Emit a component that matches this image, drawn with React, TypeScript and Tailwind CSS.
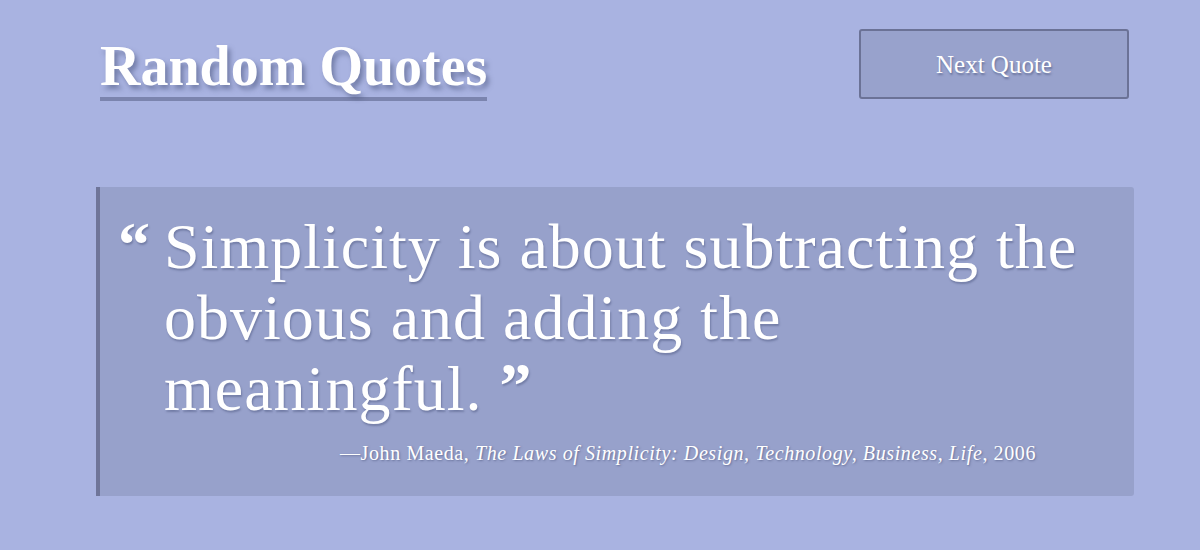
import React from 'react';

const quote = {
  lines: ['Simplicity is about subtracting the', 'obvious and adding the', 'meaningful.'],
  author: 'John Maeda',
  source: 'The Laws of Simplicity: Design, Technology, Business, Life',
  year: '2006',
};

const App = () => {
  return (
    <div className="min-h-[550px] w-full bg-[#a9b3e1] text-white font-['Liberation_Serif',serif] overflow-hidden">
      <header className="flex items-start justify-between pl-[100px] pr-[71px] pt-[29px]">
        <h1 className="mt-[9px] pb-[3px] border-b-4 border-[#7b84ae] text-[56px] leading-[56px] font-bold [text-shadow:3px_4px_5px_rgba(70,80,120,0.55)]">
          Random Quotes
        </h1>
        <button className="w-[270px] h-[70px] pt-[2px] rounded-[3px] border-2 border-[#6b7296] bg-[#98a2cc] text-[25px] text-white [text-shadow:1px_2px_2px_rgba(60,70,110,0.5)]">
          Next Quote
        </button>
      </header>

      <main className="pl-[96px] pr-[66px] pt-[86px]">
        <blockquote className="h-[309px] rounded-r-[3px] border-l-4 border-[#6f7599] bg-[#97a1cb] pl-[18px] pt-[24px] pr-[30px]">
          <div className="flex items-start">
            <span className="mr-[14px] mt-[8px] text-[64px] leading-[52px] font-bold [text-shadow:1px_2px_2px_rgba(60,70,110,0.4)]">“</span>
            <p className="text-[64px] leading-[71px] tracking-[1px] [text-shadow:1px_2px_2px_rgba(60,70,110,0.4)]">
              {quote.lines[0]}
              <br />
              {quote.lines[1]}
              <br />
              {quote.lines[2]}{' '}
              <span className="text-[64px] font-bold align-top leading-[66px]">”</span>
            </p>
          </div>
          <p className="mt-[14px] pr-[68px] text-right text-[20px] tracking-[0.6px] [text-shadow:1px_1px_2px_rgba(60,70,110,0.5)]">
            —{quote.author}, <cite className="italic">{quote.source}</cite>, {quote.year}
          </p>
        </blockquote>
      </main>
    </div>
  );
};

export default App;
